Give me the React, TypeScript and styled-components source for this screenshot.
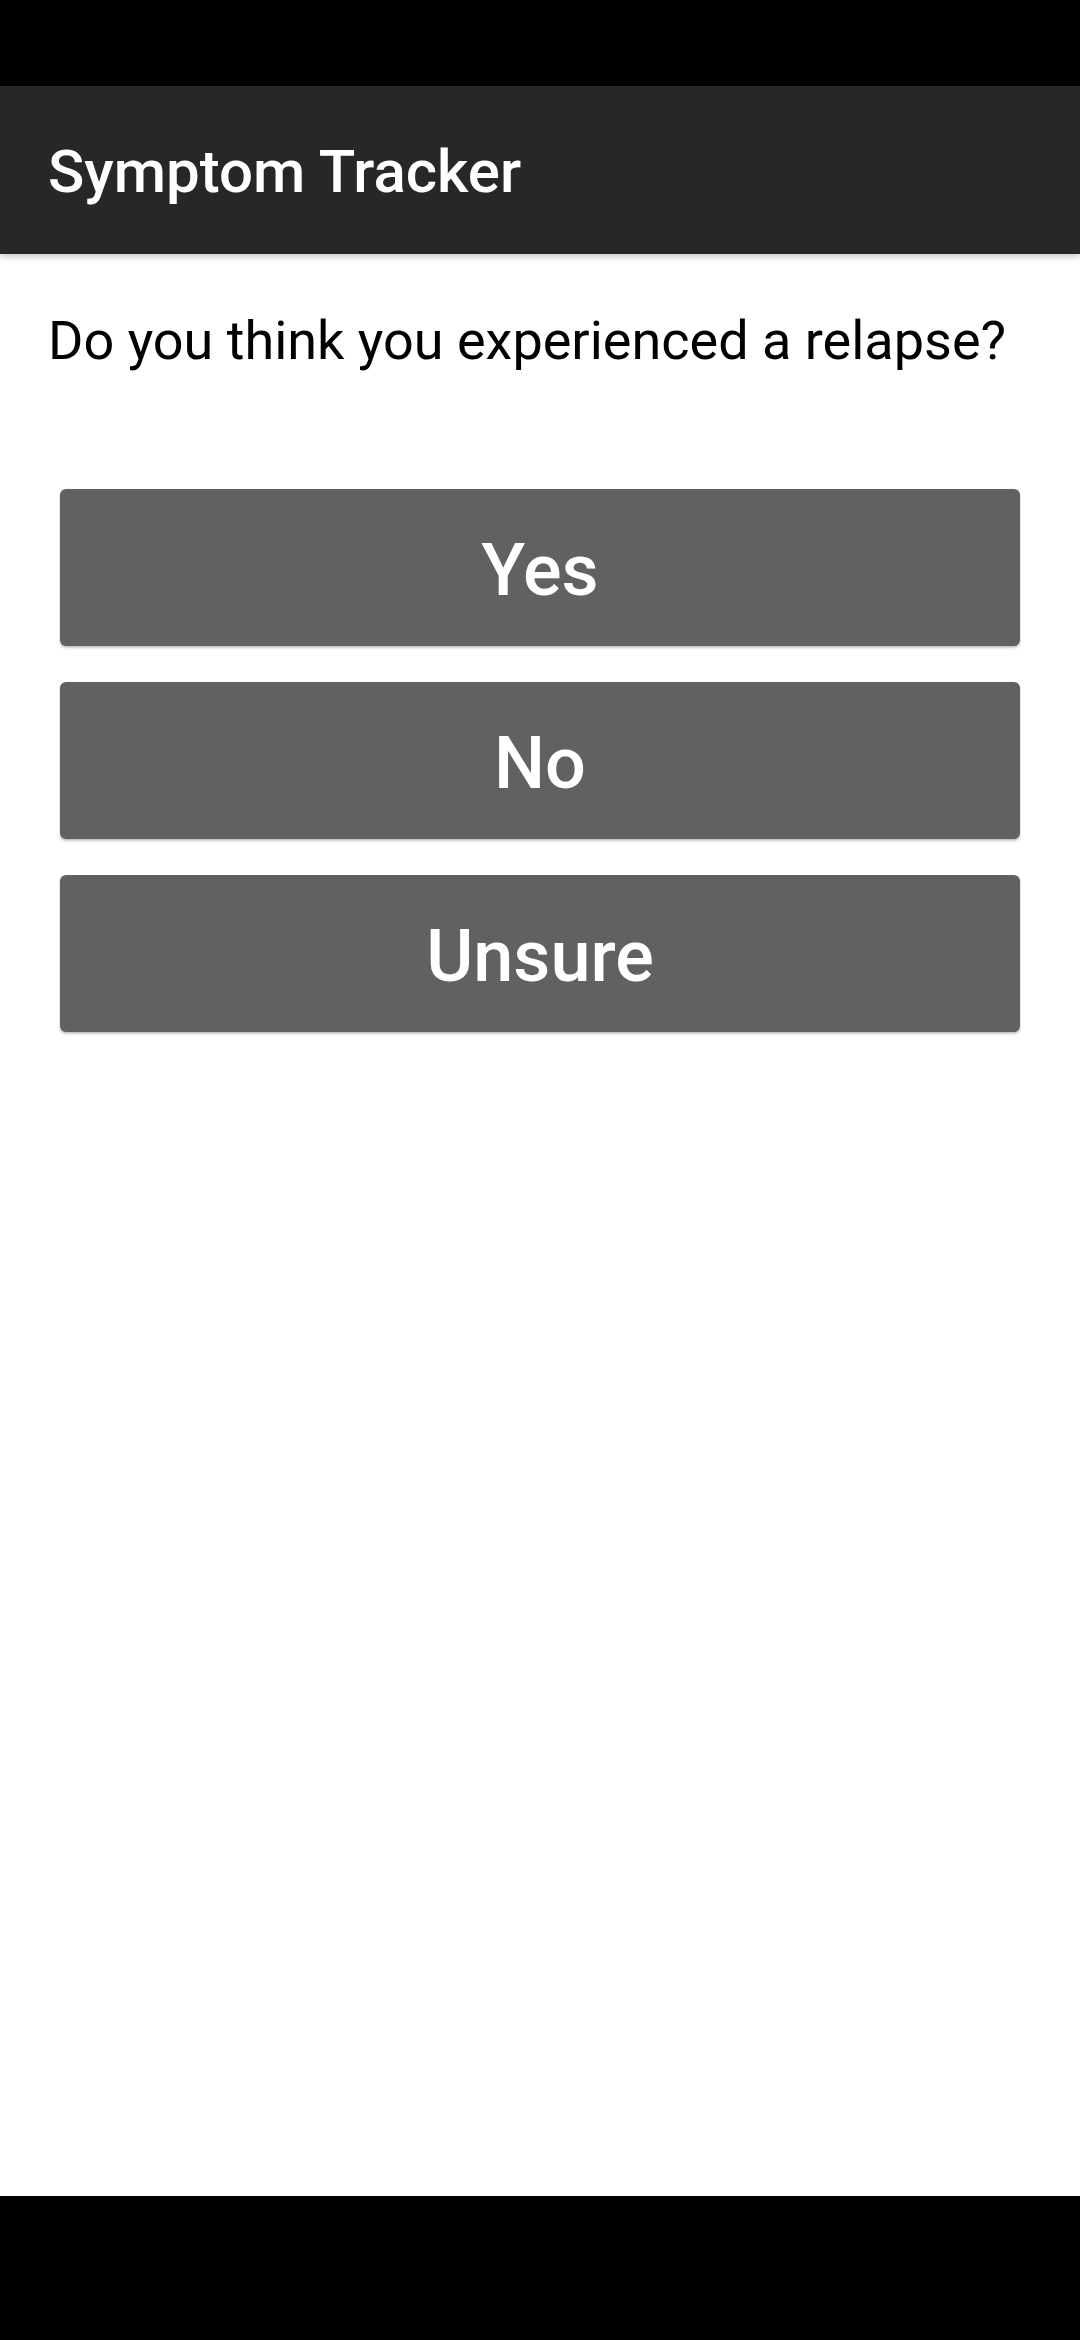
import React from 'react';
import styled, { createGlobalStyle } from 'styled-components';

const GlobalStyle = createGlobalStyle`
  html, body {
    margin: 0;
    padding: 0;
    background: #ffffff;
  }

  #root {
    min-height: 100vh;
  }
`;

const Screen = styled.div`
  display: flex;
  flex-direction: column;
  width: 1080px;
  height: 2340px;
  font-family: Roboto, "Noto Sans", "Liberation Sans", sans-serif;
  background-color: #ffffff;
  overflow: hidden;
`;

const StatusBar = styled.div`
  height: 86px;
  flex-shrink: 0;
  background-color: #000000;
`;

const Toolbar = styled.header`
  position: relative;
  z-index: 2;
  display: flex;
  align-items: center;
  height: 168px;
  flex-shrink: 0;
  padding: 0 48px;
  box-sizing: border-box;
  background-color: #272727;
  box-shadow: 0 3px 7px rgba(0, 0, 0, 0.22);
`;

const Title = styled.h1`
  margin: 0;
  color: #ffffff;
  font-size: 60px;
  font-weight: 500;
  line-height: 1.17;
  padding-top: 4px;
`;

const Content = styled.main`
  flex: 1;
  display: flex;
  flex-direction: column;
  padding: 55px 60px 0;
`;

const Question = styled.p`
  margin: 0 0 117px -12px;
  color: #000000;
  font-size: 54px;
  font-weight: 400;
  line-height: 1.171;
`;

const Options = styled.div`
  display: flex;
  flex-direction: column;
  gap: 36px;
`;

const OptionButton = styled.button`
  display: flex;
  align-items: center;
  justify-content: center;
  height: 157px;
  padding: 6px 0 0;
  border: none;
  border-radius: 6px;
  background-color: #616161;
  color: #ffffff;
  font-family: inherit;
  font-size: 72px;
  font-weight: 500;
  box-shadow: 0 2px 3px rgba(0, 0, 0, 0.18), 0 1px 2px rgba(0, 0, 0, 0.12);
  cursor: pointer;
`;

const NavBar = styled.div`
  height: 144px;
  flex-shrink: 0;
  background-color: #000000;
`;

const answers = ['Yes', 'No', 'Unsure'];

export default function App() {
  return (
    <>
      <GlobalStyle />
      <Screen>
        <StatusBar />
        <Toolbar>
          <Title>Symptom Tracker</Title>
        </Toolbar>
        <Content>
          <Question>Do you think you experienced a relapse?</Question>
          <Options>
            {answers.map((answer) => (
              <OptionButton key={answer}>{answer}</OptionButton>
            ))}
          </Options>
        </Content>
        <NavBar />
      </Screen>
    </>
  );
}
